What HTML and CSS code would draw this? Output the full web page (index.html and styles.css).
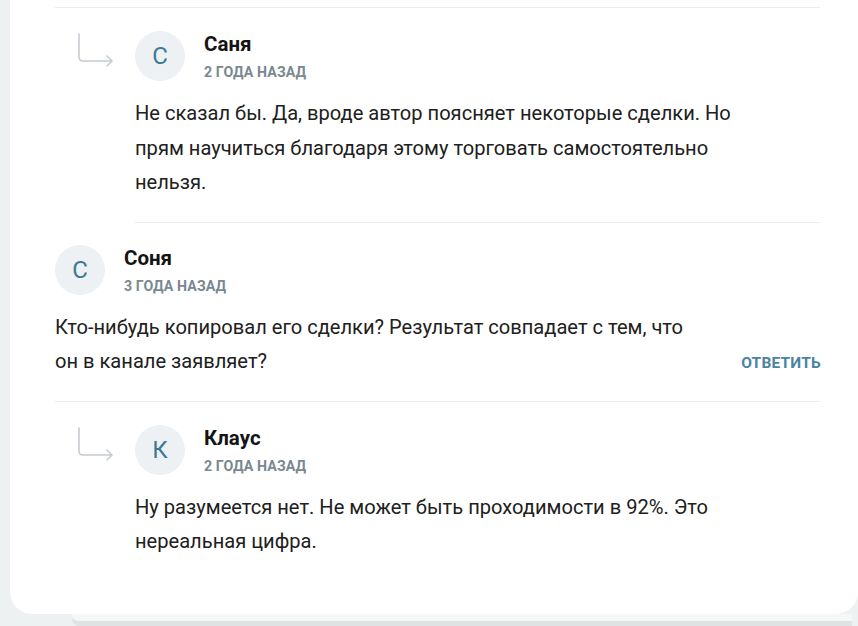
FILE: index.html
```html
<!DOCTYPE html>
<html lang="ru">
<head>
<meta charset="utf-8">
<link rel="stylesheet" href="styles.css">
</head>
<body>
<div class="page">
  <div class="card">
    <div class="comments">
      <div class="thread-top"></div>

      <div class="reply">
        <div class="reply-mark">
          <svg width="38" height="36" viewBox="0 0 38 36"><path d="M1 1 V24 Q1 28 5 28 H34 M29 23 L34 28 L29 33" fill="none" stroke="#c6ccd1" stroke-width="1.6" stroke-linecap="round" stroke-linejoin="round"/></svg>
        </div>
        <div class="comment bordered">
          <div class="head">
            <div class="avatar">С</div>
            <div class="meta">
              <div class="name">Саня</div>
              <div class="date">2 года назад</div>
            </div>
          </div>
          <p class="text">Не сказал бы. Да, вроде автор поясняет некоторые сделки. Но прям научиться благодаря этому торговать самостоятельно нельзя.</p>
        </div>
      </div>

      <div class="comment bordered top-level">
        <div class="head">
          <div class="avatar">С</div>
          <div class="meta">
            <div class="name">Соня</div>
            <div class="date">3 года назад</div>
          </div>
        </div>
        <div class="foot">
          <p class="text">Кто-нибудь копировал его сделки? Результат совпадает с тем, что он в канале заявляет?</p>
          <span class="answer">Ответить</span>
        </div>
      </div>

      <div class="reply">
        <div class="reply-mark">
          <svg width="38" height="36" viewBox="0 0 38 36"><path d="M1 1 V24 Q1 28 5 28 H34 M29 23 L34 28 L29 33" fill="none" stroke="#c6ccd1" stroke-width="1.6" stroke-linecap="round" stroke-linejoin="round"/></svg>
        </div>
        <div class="comment last">
          <div class="head">
            <div class="avatar">К</div>
            <div class="meta">
              <div class="name">Клаус</div>
              <div class="date">2 года назад</div>
            </div>
          </div>
          <p class="text">Ну разумеется нет. Не может быть проходимости в 92%. Это нереальная цифра.</p>
        </div>
      </div>
    </div>
  </div>
  <div class="under"></div>
</div>
</body>
</html>
```

FILE: styles.css
```css
html, body {
  margin: 0;
  padding: 0;
  background: #eef1f2;
  font-family: Roboto, "Liberation Sans", Arial, sans-serif;
  overflow: hidden;
}

.page {
  width: 858px;
  height: 626px;
  padding-left: 10px;
  box-sizing: border-box;
}

.card {
  background: #ffffff;
  width: 848px;
  box-sizing: border-box;
  padding: 7px 38px 0 45px;
  border-radius: 0 0 22px 22px;
  position: relative;
  z-index: 1;
}

.thread-top {
  border-top: 1px solid #ececec;
}

.reply {
  display: flex;
}

.reply-mark {
  width: 80px;
  flex: none;
  padding: 25px 0 0 23px;
  box-sizing: border-box;
}

.reply-mark svg {
  display: block;
}

.comment {
  flex: 1;
  min-width: 0;
  padding: 23px 0 22px;
}

.comment.top-level {
  padding-top: 22px;
}

.bordered {
  border-bottom: 1px solid #ececec;
}

.comment.last {
  padding-top: 23px;
  padding-bottom: 55px;
}

.head {
  display: flex;
  align-items: flex-start;
  gap: 19px;
  height: 50px;
}

.avatar {
  width: 50px;
  height: 50px;
  border-radius: 50%;
  background: #edf1f4;
  color: #3e7893;
  font-size: 24px;
  display: flex;
  align-items: center;
  justify-content: center;
  flex: none;
}

.meta {
  padding-top: 1px;
}

.name {
  font-size: 20.5px;
  font-weight: 700;
  line-height: 25px;
  color: #141414;
}

.date {
  margin-top: 6px;
  font-size: 14.2px;
  font-weight: 700;
  line-height: 18px;
  color: #7a8891;
  text-transform: uppercase;
  letter-spacing: 0.1px;
}

.text {
  margin: 15px 0 0;
  max-width: 640px;
  font-size: 20.1px;
  line-height: 34.5px;
  color: #202020;
}

.foot {
  display: flex;
  justify-content: space-between;
  align-items: flex-end;
}

.answer {
  font-size: 15.5px;
  font-weight: 700;
  color: #4a84a0;
  text-transform: uppercase;
  letter-spacing: 0.2px;
  line-height: 31px;
  margin-right: -1px;
}

.under {
  margin-left: 62px;
  width: 780px;
  height: 7px;
  background: #f6f7f7;
  border-radius: 0 0 0 14px;
  box-shadow: 0 5px 0 #e0e3e4;
}
```
